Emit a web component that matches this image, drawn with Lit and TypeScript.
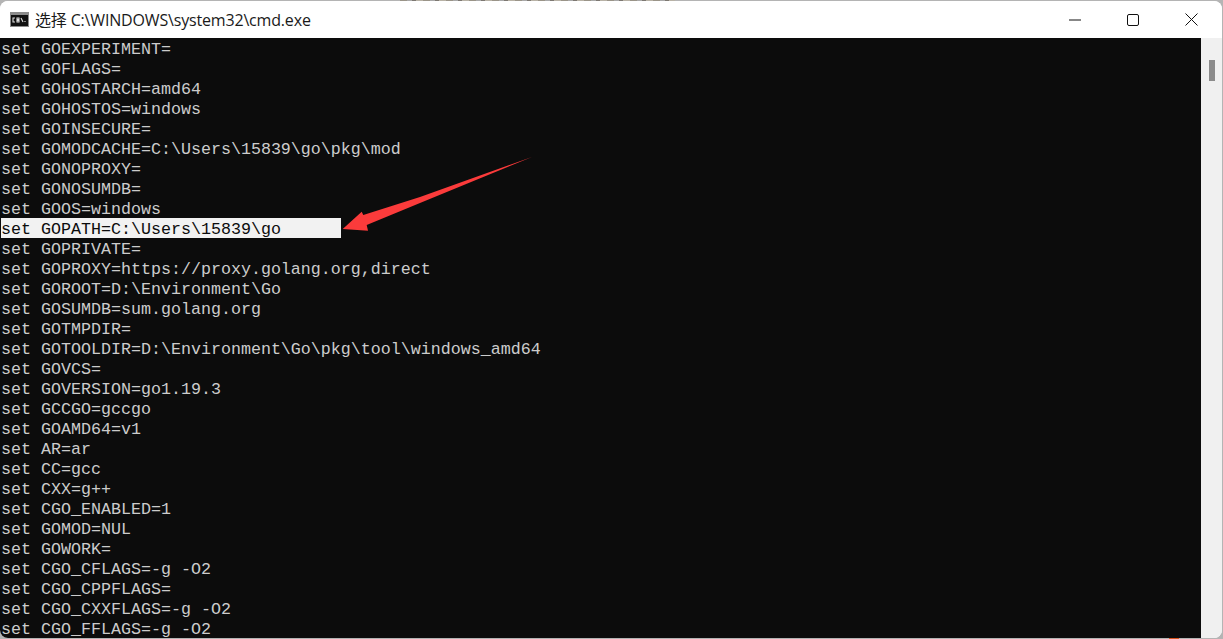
import { LitElement, html, css, svg } from "lit";
import { customElement } from "lit/decorators.js";

const LINES = [
  "GOEXPERIMENT=", "GOFLAGS=", "GOHOSTARCH=amd64", "GOHOSTOS=windows", "GOINSECURE=",
  "GOMODCACHE=C:\\Users\\15839\\go\\pkg\\mod", "GONOPROXY=", "GONOSUMDB=", "GOOS=windows",
  "GOPATH=C:\\Users\\15839\\go", "GOPRIVATE=", "GOPROXY=https://proxy.golang.org,direct",
  "GOROOT=D:\\Environment\\Go", "GOSUMDB=sum.golang.org", "GOTMPDIR=",
  "GOTOOLDIR=D:\\Environment\\Go\\pkg\\tool\\windows_amd64", "GOVCS=", "GOVERSION=go1.19.3",
  "GCCGO=gccgo", "GOAMD64=v1", "AR=ar", "CC=gcc", "CXX=g++", "CGO_ENABLED=1", "GOMOD=NUL",
  "GOWORK=", "CGO_CFLAGS=-g -O2", "CGO_CPPFLAGS=", "CGO_CXXFLAGS=-g -O2", "CGO_FFLAGS=-g -O2",
];

@customElement("app-root")
export class AppRoot extends LitElement {
  static styles = css`
    :host { display: block; width: 1223px; height: 639px; overflow: hidden; background: #b4b4b4; position: relative; }
    .window {
      height: 637px; margin: 1px 1px 0 0; border-radius: 8px; overflow: hidden;
      display: flex; flex-direction: column; background: #fff;
    }
    .titlebar { height: 37px; flex: none; display: flex; align-items: center; background: #fff; }
    .app-icon { margin-left: 10px; width: 19px; height: 15px; flex: none; }
    .title {
      margin-left: 6px; font: 16px/20px "Open Sans", "Noto Sans CJK SC", sans-serif; color: #1a1a1a; white-space: nowrap;
      letter-spacing: -0.17px;
    }
    .controls { margin-left: auto; display: flex; padding-right: 1px; }
    .ctrl { width: 58.5px; height: 37px; display: flex; align-items: center; justify-content: center; }
    .content { flex: 1; display: flex; min-height: 0; }
    .console {
      flex: 1; background: #0c0c0c; color: #cccccc; overflow: hidden;
      font: 16.67px/24px "Liberation Mono", monospace; padding-left: 1px;
    }
    .line { height: 20px; white-space: pre; }
    .selected { width: 340px; background: #f2f2f2; color: #0c0c0c; }
    .scrollbar { width: 21px; flex: none; background: #f0f0f0; }
    .thumb { width: 6px; height: 21px; margin: 22px 0 0 8px; background: #8b8b8b; }
    .arrow { position: absolute; left: 0; top: 0; pointer-events: none; }
    .noise {
      position: absolute; left: 400px; top: 0; width: 275px; height: 1px;
      background: repeating-linear-gradient(90deg, #9a9488 0 7px, #a9a9a9 7px 12px, #7d7872 12px 16px, #b8b2a6 16px 23px);
    }
    .bottom { position: absolute; left: 1169px; top: 638px; width: 10px; height: 1px; background: #d9541e; }
  `;

  render() {
    return html`
      <div class="window">
        <div class="titlebar">
          <svg class="app-icon" viewBox="0 0 19 15">
            <rect width="19" height="15" fill="#8c8c8c"/>
            <rect x="1" y="3" width="17" height="11" fill="#111"/>
            <path d="M5 6H3v4h2M7 6h2v1.5H7zM7 8.5h2V10H7zM11 6l2 4M15 9v1" stroke="#e0e0e0" stroke-width="1.1" fill="none"/>
          </svg>
          <span class="title">选择 C:\\WINDOWS\\system32\\cmd.exe</span>
          <div class="controls">
            <div class="ctrl">
              <svg width="12" height="2" viewBox="0 0 12 2"><path d="M0 1h12" stroke="#111" stroke-width="1"/></svg>
            </div>
            <div class="ctrl">
              <svg width="12" height="12" viewBox="0 0 12 12"><rect x=".5" y=".5" width="11" height="11" rx="1.5" fill="none" stroke="#111"/></svg>
            </div>
            <div class="ctrl">
              <svg width="13" height="13" viewBox="0 0 13 13"><path d="M.5.5l12 12M12.5.5l-12 12" stroke="#111" stroke-width="1"/></svg>
            </div>
          </div>
        </div>
        <div class="content">
          <div class="console">
            ${LINES.map((l, i) => html`<div class="line ${i === 9 ? "selected" : ""}">set ${l}</div>`)}
          </div>
          <div class="scrollbar"><div class="thumb"></div></div>
        </div>
      </div>
      <div class="noise"></div>
      <div class="bottom"></div>
      <svg class="arrow" width="1223" height="639" viewBox="0 0 1223 639">
        ${svg`<polygon points="532,157 420,197 363.3,215 361.7,211.7 342.7,229 368,230.7 366.7,225 420,203" fill="#fb3b3b"/>`}
      </svg>
    `;
  }
}
